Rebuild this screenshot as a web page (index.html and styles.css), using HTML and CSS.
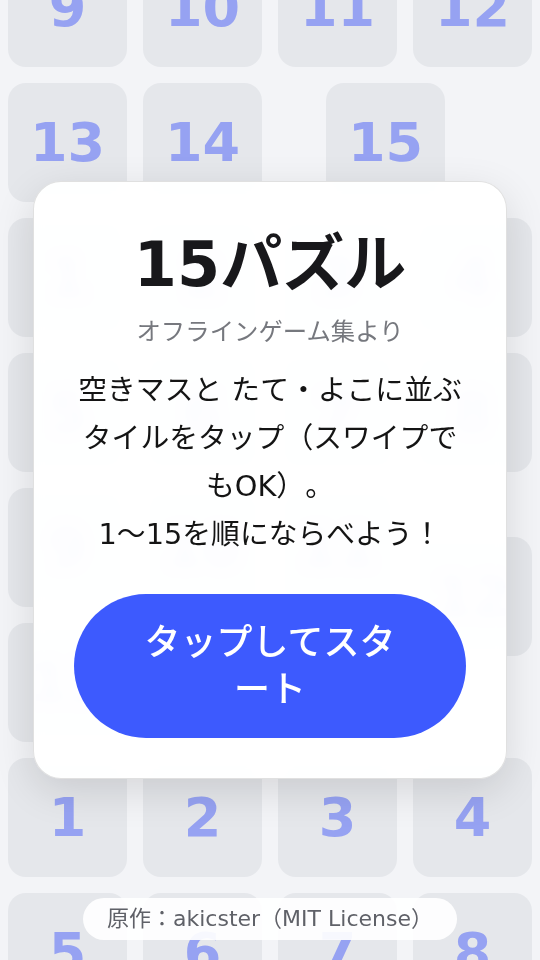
FILE: index.html
```html
<!DOCTYPE html>
<html lang="ja">
<head>
<meta charset="utf-8">
<title>15パズル</title>
<link rel="stylesheet" href="styles.css">
</head>
<body>
<div class="board">
  <div class="tile">9</div><div class="tile">10</div><div class="tile">11</div><div class="tile">12</div>
  <div class="tile">13</div><div class="tile">14</div><div class="tile slide-right">15</div><div class="empty"></div>
  <div class="tile">1</div><div class="tile">2</div><div class="tile">3</div><div class="tile">4</div>
  <div class="tile">5</div><div class="tile">6</div><div class="tile">7</div><div class="tile">8</div>
  <div class="tile">9</div><div class="tile">10</div><div class="tile">11</div><div class="tile slide-down">12</div>
  <div class="tile">13</div><div class="tile">14</div><div class="tile">15</div><div class="empty"></div>
  <div class="tile">1</div><div class="tile">2</div><div class="tile">3</div><div class="tile">4</div>
  <div class="tile">5</div><div class="tile">6</div><div class="tile">7</div><div class="tile">8</div>
</div>

<div class="card">
  <h1 class="title">15パズル</h1>
  <p class="subtitle">オフラインゲーム集より</p>
  <p class="desc">空きマスと たて・よこに並ぶタイルをタップ（スワイプでもOK）。<br>1〜15を順にならべよう！</p>
  <button class="start">タップしてスタート</button>
</div>

<div class="credit">原作：akicster（MIT License）</div>
</body>
</html>
```
FILE: styles.css
```css
html, body {
  margin: 0;
  padding: 0;
}
body {
  background: #f3f4f7;
  font-family: "DejaVu Sans", "Noto Sans CJK JP", sans-serif;
  text-spacing-trim: space-all;
  width: 540px;
  height: 960px;
  overflow: hidden;
}
.board {
  display: grid;
  grid-template-columns: repeat(4, 119px);
  grid-auto-rows: 119px;
  gap: 16px;
  padding: 0 8px;
  margin-top: -52px;
}
.tile {
  background: #e5e7eb;
  border-radius: 18px;
  display: flex;
  align-items: center;
  justify-content: center;
  font-size: 54px;
  font-weight: 700;
  color: #96a2f2;
}
.slide-right { transform: translateX(48px); }
.slide-down { transform: translateY(49px); }

.card {
  position: fixed;
  top: 50%;
  left: 50%;
  transform: translate(-50%, -50%);
  width: 474px;
  box-sizing: border-box;
  padding: 40px;
  background: rgba(255, 255, 255, 0.965);
  backdrop-filter: blur(6px);
  border: 1px solid rgba(0, 0, 0, 0.12);
  border-radius: 28px;
  box-shadow: 0 12px 40px rgba(0, 0, 0, 0.12);
  text-align: center;
}
.title {
  margin: 7px 0 0;
  font-size: 62px;
  line-height: 72px;
  font-weight: 700;
  color: #18181b;
}
.subtitle {
  margin: 13px 0 0;
  font-size: 24.4px;
  line-height: 36px;
  color: #76787e;
}
.desc {
  margin: 16px 0 0;
  font-size: 28.8px;
  line-height: 48px;
  color: #141414;
}
.start {
  display: block;
  margin: 36px 0 0;
  width: 100%;
  padding: 25px 56px;
  border: none;
  border-radius: 999px;
  background: #3d5afe;
  color: #ffffff;
  font-family: inherit;
  text-spacing-trim: space-all;
  font-size: 36px;
  line-height: 47px;
  font-weight: 500;
}
.credit {
  position: fixed;
  bottom: 20px;
  left: 50%;
  transform: translateX(-50%);
  background: rgba(255, 255, 255, 0.92);
  border-radius: 999px;
  padding: 4px 24px;
  font-size: 22px;
  line-height: 34px;
  color: #5f6168;
  white-space: nowrap;
}
```
